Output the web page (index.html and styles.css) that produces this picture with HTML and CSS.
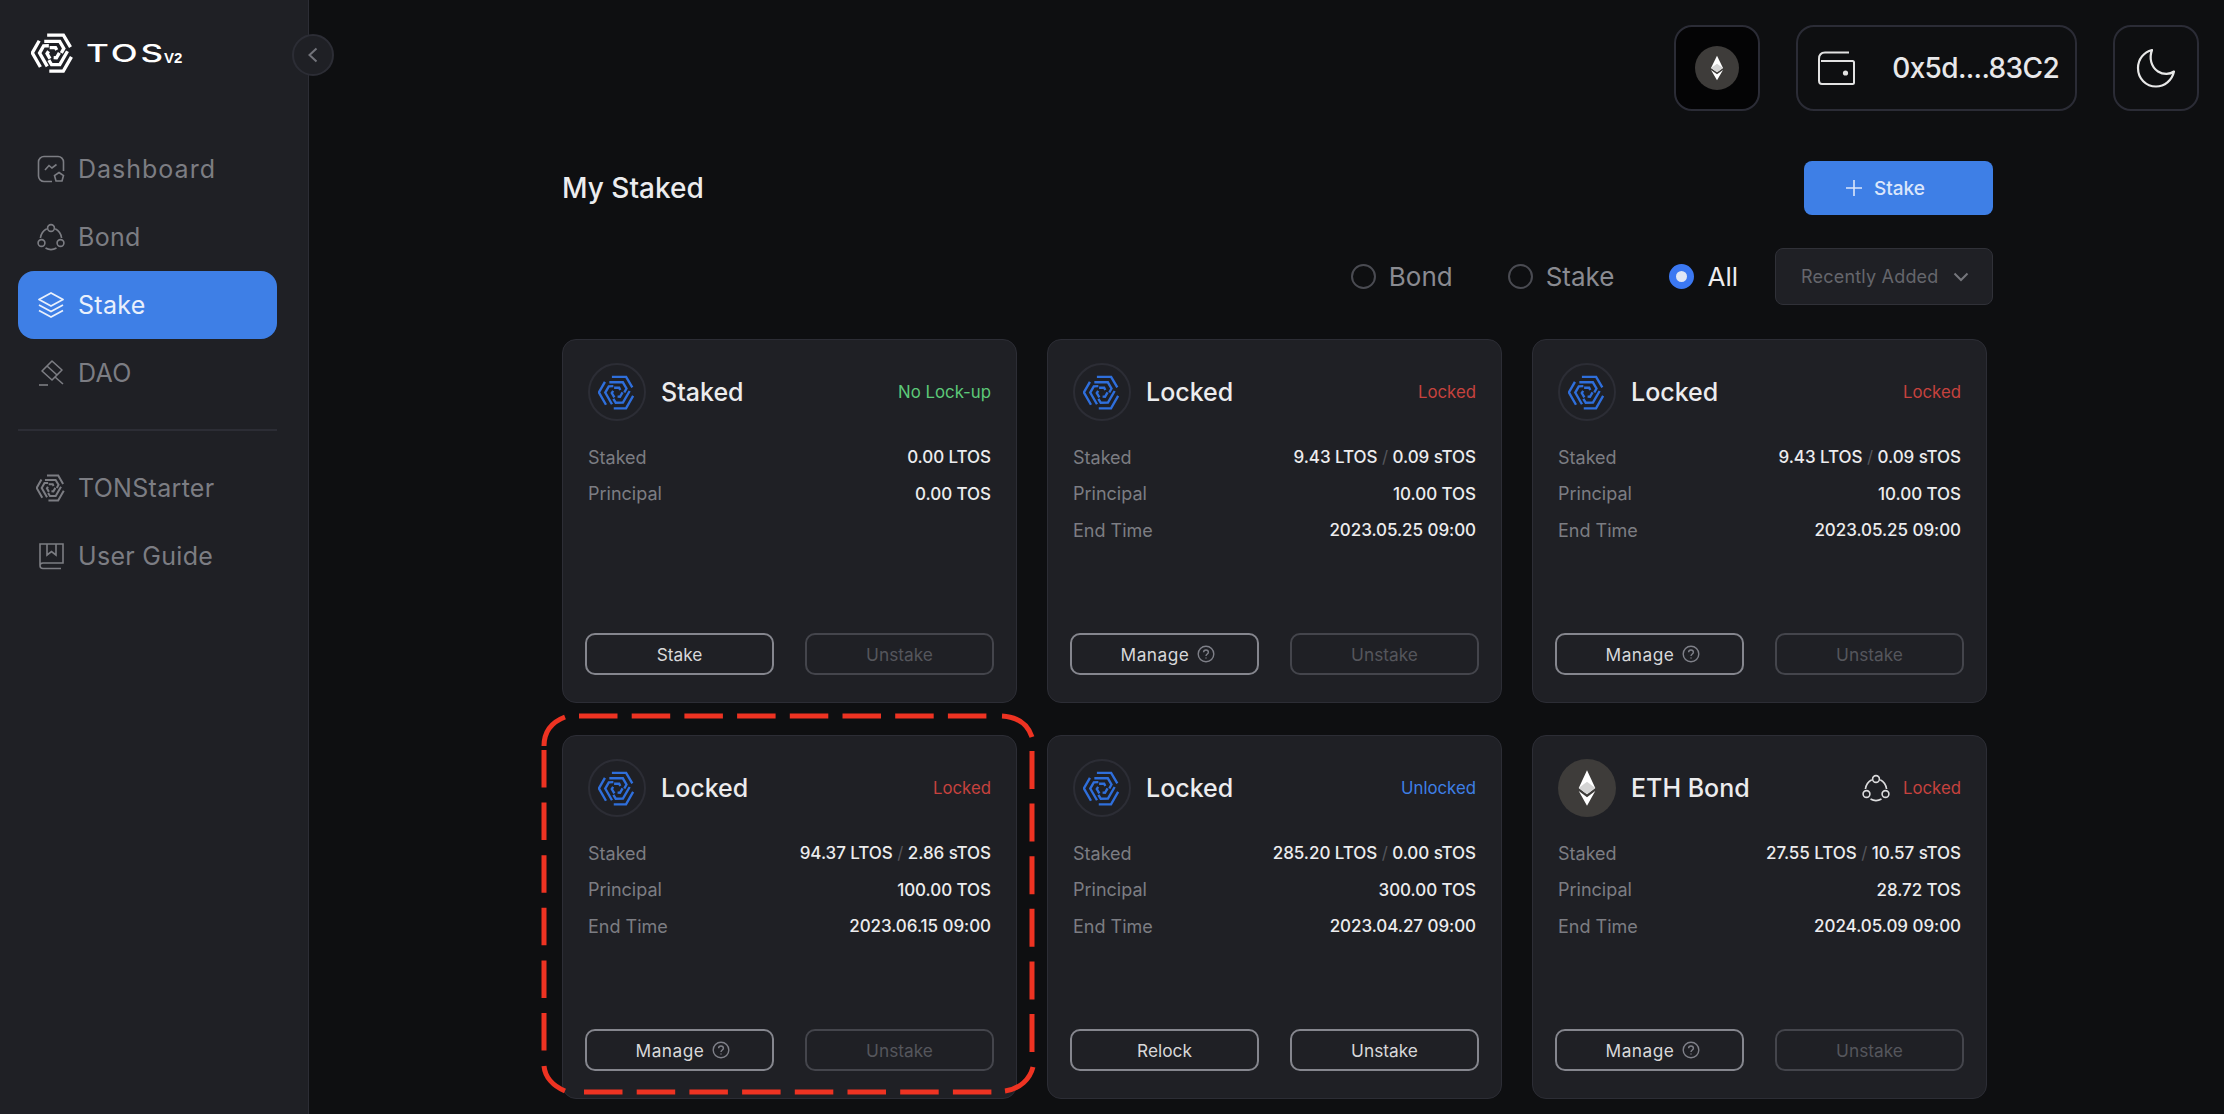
FILE: index.html
```html
<!DOCTYPE html>
<html lang="en">
<head>
<meta charset="utf-8">
<title>TOS V2 - Stake</title>
<link rel="stylesheet" href="styles.css">
</head>
<body>
<svg class="defs" width="0" height="0" aria-hidden="true">
  <defs>
    <g id="arm" fill="none" stroke="currentColor" stroke-linejoin="miter" stroke-linecap="butt">
      <path d="M-14 -43H25L42 -14"/>
      <path d="M-21 -28H16L26 -11L20 0"/>
      <path d="M-8 -13H6L9 -7"/>
    </g>
    <g id="swirl">
      <use href="#arm"/>
      <use href="#arm" transform="rotate(120)"/>
      <use href="#arm" transform="rotate(240)"/>
    </g>
    <g id="bond" fill="none" stroke="currentColor" stroke-width="1.6">
      <circle cx="14" cy="5" r="3.4"/>
      <circle cx="4.5" cy="20" r="3.4"/>
      <circle cx="23.5" cy="20" r="3.4"/>
      <path d="M9.8 5.8C6.5 7.5 4 10.8 3.4 15"/>
      <path d="M18.2 5.8C21.5 7.5 24 10.8 24.6 15"/>
      <path d="M8.5 25C12 27 16 27 19.5 25"/>
    </g>
    <g id="eth">
      <path d="M12 1L3 16.5L12 22L21 16.5Z" fill="#fff"/>
      <path d="M3 19L12 32L21 19L12 24.5Z" fill="#fff"/>
      <path d="M12 11L3 16.5L12 22L21 16.5Z" fill="#d4d4d4"/>
    </g>
    <g id="help" fill="none" stroke="#7f8089" stroke-width="1.4">
      <circle cx="9" cy="9" r="7.8"/>
      <path d="M6.6 7.2C6.6 5.8 7.7 5 9 5S11.4 5.9 11.4 7.2C11.4 8.9 9 9 9 11"/>
      <path d="M9 12.4V13.6"/>
    </g>
  </defs>
</svg>

<aside class="sidebar">
  <div class="brand">
    <svg class="brand-mark" viewBox="-52 -48 104 96"><use href="#swirl"/></svg>
    <span class="brand-name">TOS</span><span class="brand-ver">V2</span>
  </div>
  <button class="collapse" aria-label="Collapse">
    <svg width="14" height="20" viewBox="0 0 14 20"><path d="M10.5 3.5L3.5 10L10.5 16.5" fill="none" stroke="#72737a" stroke-width="2"/></svg>
  </button>
  <nav class="nav">
    <a class="nav-item">
      <svg class="nav-icon" viewBox="0 0 28 28" fill="none" stroke="currentColor" stroke-width="1.6">
        <path d="M15 26.500H7A5.500 5.500 0 0 1 1.500 21V7A5.500 5.500 0 0 1 7 1.500H21A5.500 5.500 0 0 1 26.500 7V16"/>
        <path d="M8 15L12 10.500L15 13L19.500 9.500"/>
        <path d="M22 17.500L26.500 20.500L25 26H19L17.500 20.500Z"/>
      </svg>
      <span class="nav-wide">Dashboard</span>
    </a>
    <a class="nav-item">
      <svg class="nav-icon" viewBox="0 0 28 28"><use href="#bond"/></svg>
      <span>Bond</span>
    </a>
    <a class="nav-item active">
      <svg class="nav-icon" viewBox="0 0 28 28" fill="none" stroke="currentColor" stroke-width="1.8" stroke-linejoin="round">
        <path d="M14 2L26 8.500L14 15L2 8.500Z"/>
        <path d="M2 14L14 20.500L26 14"/>
        <path d="M2 19.500L14 26L26 19.500"/>
      </svg>
      <span>Stake</span>
    </a>
    <a class="nav-item">
      <svg class="nav-icon" viewBox="0 0 28 28" fill="none" stroke="currentColor" stroke-width="1.6">
        <path d="M15 2L25 11L15 21L5 12Z" stroke-linejoin="round"/>
        <path d="M10 7L20 16"/>
        <path d="M18 18L26 25"/>
        <path d="M2 26H11"/>
      </svg>
      <span>DAO</span>
    </a>
    <div class="nav-rule"></div>
    <a class="nav-item">
      <svg class="nav-icon nav-swirl" viewBox="-52 -48 104 96"><use href="#swirl"/></svg>
      <span>TONStarter</span>
    </a>
    <a class="nav-item">
      <svg class="nav-icon" viewBox="0 0 28 28" fill="none" stroke="currentColor" stroke-width="1.6">
        <path d="M3 23V2H26V21H6C4 21 3 22 3 23.500C3 25 4 26.500 6 26.500H24"/>
        <path d="M10 2V13L14.500 9.500L19 13V2"/>
      </svg>
      <span>User Guide</span>
    </a>
  </nav>
</aside>

<main class="main">
  <header class="topbar">
    <button class="top-btn eth-btn" aria-label="Ethereum">
      <span class="eth-coin"><svg width="16" height="26" viewBox="0 0 24 33" preserveAspectRatio="none"><use href="#eth"/></svg></span>
    </button>
    <button class="top-btn wallet-btn">
      <svg width="38" height="34" viewBox="0 0 38 34" fill="none" stroke="#e2e2e2" stroke-width="2"><path d="M2 8C2 4 4 1.500 8 1.500H32"/><path d="M2 8V29.500C2 31.500 3 33 5 33H35.500C36.500 33 37 32.500 37 31.500V11.500C37 10.500 36.500 10 35.500 10H4"/><circle cx="28.500" cy="22" r="2.600" fill="#e2e2e2" stroke="none"/></svg>
      <span class="addr">0x5d....83C2</span>
    </button>
    <button class="top-btn moon-btn" aria-label="Theme">
      <svg width="40" height="40" viewBox="0 0 40 40" fill="none" stroke="#e8e8e8" stroke-width="2.200"><path d="M16 2C8 4 2 11 2 20C2 30.500 10 38.500 20 38.500C28.500 38.500 36 32.500 38 23.500C34 26.500 27.500 27 22 23.500C15 19 13 10 16 2Z" stroke-linejoin="round"/></svg>
    </button>
  </header>

  <section class="content">
    <div class="title-row">
      <h1 class="page-title">My Staked</h1>
      <button class="primary-btn">
        <svg width="16" height="16" viewBox="0 0 16 16"><path d="M8 0V16M0 8H16" stroke="#dbe6fb" stroke-width="1.600"/></svg>
        <span>Stake</span>
      </button>
    </div>

    <div class="filter-row">
      <label class="radio"><span class="radio-dot"></span>Bond</label>
      <label class="radio"><span class="radio-dot"></span>Stake</label>
      <label class="radio on"><span class="radio-dot"></span>All</label>
      <div class="select">
        <span>Recently Added</span>
        <svg width="16" height="10" viewBox="0 0 16 10"><path d="M1.500 1.500L8 8L14.500 1.500" fill="none" stroke="#75767c" stroke-width="2"/></svg>
      </div>
    </div>

    <div class="cards">
      <article class="card">
        <div class="card-head">
          <span class="coin"><svg class="coin-swirl" viewBox="-52 -48 104 96"><use href="#swirl"/></svg></span>
          <h2 class="card-title">Staked</h2>
          <span class="status green">No Lock-up</span>
        </div>
        <dl class="rows">
          <div class="row"><dt>Staked</dt><dd>0.00 LTOS</dd></div>
          <div class="row"><dt>Principal</dt><dd>0.00 TOS</dd></div>
        </dl>
        <div class="actions">
          <button class="btn">Stake</button>
          <button class="btn off">Unstake</button>
        </div>
      </article>

      <article class="card">
        <div class="card-head">
          <span class="coin"><svg class="coin-swirl" viewBox="-52 -48 104 96"><use href="#swirl"/></svg></span>
          <h2 class="card-title">Locked</h2>
          <span class="status red">Locked</span>
        </div>
        <dl class="rows">
          <div class="row"><dt>Staked</dt><dd>9.43 LTOS <i>/</i> 0.09 sTOS</dd></div>
          <div class="row"><dt>Principal</dt><dd>10.00 TOS</dd></div>
          <div class="row"><dt>End Time</dt><dd>2023.05.25 09:00</dd></div>
        </dl>
        <div class="actions">
          <button class="btn"><span class="btn-label">Manage</span><svg width="18" height="18" viewBox="0 0 18 18"><use href="#help"/></svg></button>
          <button class="btn off">Unstake</button>
        </div>
      </article>

      <article class="card">
        <div class="card-head">
          <span class="coin"><svg class="coin-swirl" viewBox="-52 -48 104 96"><use href="#swirl"/></svg></span>
          <h2 class="card-title">Locked</h2>
          <span class="status red">Locked</span>
        </div>
        <dl class="rows">
          <div class="row"><dt>Staked</dt><dd>9.43 LTOS <i>/</i> 0.09 sTOS</dd></div>
          <div class="row"><dt>Principal</dt><dd>10.00 TOS</dd></div>
          <div class="row"><dt>End Time</dt><dd>2023.05.25 09:00</dd></div>
        </dl>
        <div class="actions">
          <button class="btn"><span class="btn-label">Manage</span><svg width="18" height="18" viewBox="0 0 18 18"><use href="#help"/></svg></button>
          <button class="btn off">Unstake</button>
        </div>
      </article>

      <article class="card">
        <div class="card-head">
          <span class="coin"><svg class="coin-swirl" viewBox="-52 -48 104 96"><use href="#swirl"/></svg></span>
          <h2 class="card-title">Locked</h2>
          <span class="status red">Locked</span>
        </div>
        <dl class="rows">
          <div class="row"><dt>Staked</dt><dd>94.37 LTOS <i>/</i> 2.86 sTOS</dd></div>
          <div class="row"><dt>Principal</dt><dd>100.00 TOS</dd></div>
          <div class="row"><dt>End Time</dt><dd>2023.06.15 09:00</dd></div>
        </dl>
        <div class="actions">
          <button class="btn"><span class="btn-label">Manage</span><svg width="18" height="18" viewBox="0 0 18 18"><use href="#help"/></svg></button>
          <button class="btn off">Unstake</button>
        </div>
      </article>

      <article class="card">
        <div class="card-head">
          <span class="coin"><svg class="coin-swirl" viewBox="-52 -48 104 96"><use href="#swirl"/></svg></span>
          <h2 class="card-title">Locked</h2>
          <span class="status blue">Unlocked</span>
        </div>
        <dl class="rows">
          <div class="row"><dt>Staked</dt><dd>285.20 LTOS <i>/</i> 0.00 sTOS</dd></div>
          <div class="row"><dt>Principal</dt><dd>300.00 TOS</dd></div>
          <div class="row"><dt>End Time</dt><dd>2023.04.27 09:00</dd></div>
        </dl>
        <div class="actions">
          <button class="btn">Relock</button>
          <button class="btn">Unstake</button>
        </div>
      </article>

      <article class="card">
        <div class="card-head">
          <span class="coin coin-eth"><svg width="22" height="38" viewBox="0 0 24 33" preserveAspectRatio="none"><use href="#eth"/></svg></span>
          <h2 class="card-title">ETH Bond</h2>
          <svg class="status-icon" width="28" height="28" viewBox="0 0 28 28"><use href="#bond"/></svg>
          <span class="status red">Locked</span>
        </div>
        <dl class="rows">
          <div class="row"><dt>Staked</dt><dd>27.55 LTOS <i>/</i> 10.57 sTOS</dd></div>
          <div class="row"><dt>Principal</dt><dd>28.72 TOS</dd></div>
          <div class="row"><dt>End Time</dt><dd>2024.05.09 09:00</dd></div>
        </dl>
        <div class="actions">
          <button class="btn"><span class="btn-label">Manage</span><svg width="18" height="18" viewBox="0 0 18 18"><use href="#help"/></svg></button>
          <button class="btn off">Unstake</button>
        </div>
      </article>
    </div>
  </section>
</main>

<svg class="callout" width="2224" height="1114" viewBox="0 0 2224 1114" fill="none" aria-hidden="true">
  <g stroke="#ee3322" stroke-width="5">
    <path d="M544 746C544 731 552 722 565 717"/>
    <path d="M1002 716C1018 717 1028 725 1032 737"/>
    <path d="M544 1066C545 1077 553 1086 565 1091"/>
    <path d="M1033 1067C1030 1079 1020 1089 1005 1091"/>
    <path d="M579 716H990" stroke-dasharray="38.500 14.200"/>
    <path d="M584 1092H995" stroke-dasharray="38.500 14.200"/>
    <path d="M544 750V1055" stroke-dasharray="37.500 15.100"/>
    <path d="M1032 751V1056" stroke-dasharray="38 14.600"/>
  </g>
</svg>
</body>
</html>
```

FILE: styles.css
```css
* { box-sizing: border-box; }

html, body { margin: 0; height: 100%; }

body {
  display: flex;
  width: 2224px;
  height: 1114px;
  overflow: hidden;
  background: #0e0f11;
  color: #e8e8ea;
  font-family: "Inter", "Liberation Sans", sans-serif;
}

button {
  font-family: inherit;
  cursor: pointer;
}

h1, h2, dl, dd, dt { margin: 0; }

.defs { position: absolute; }

/* sidebar */
.sidebar {
  position: relative;
  flex: 0 0 309px;
  height: 100%;
  padding: 0 31px 0 18px;
  background: #1f2025;
  border-right: 1px solid #2c2d35;
}

.brand {
  display: flex;
  align-items: flex-end;
  height: 73px;
  padding: 33px 0 0 13px;
  color: #fff;
}

.brand-mark {
  width: 44px;
  height: 40px;
  stroke-width: 8;
}

.brand-name {
  width: 77px;
  margin: 0 0 9px 11px;
  font-size: 24px;
  line-height: 20px;
  font-weight: 500;
  letter-spacing: 2px;
  transform: scaleX(1.46);
  transform-origin: left center;
}

.brand-ver {
  margin: 0 0 9px 1px;
  font-size: 15px;
  line-height: 13px;
  font-weight: 700;
  font-family: "Liberation Sans", sans-serif;
}

.collapse {
  position: absolute;
  top: 34px;
  left: 292px;
  display: flex;
  align-items: center;
  justify-content: center;
  width: 42px;
  height: 42px;
  padding: 0;
  background: #1f2025;
  border: 2px solid #2c2d35;
  border-radius: 50%;
}

.nav {
  display: flex;
  flex-direction: column;
  margin-top: 62px;
}

.nav-item {
  display: flex;
  align-items: center;
  gap: 13px;
  height: 68px;
  padding-left: 19px;
  border-radius: 16px;
  color: #7c7d83;
  font-size: 25px;
  letter-spacing: 0.3px;
}

.nav-wide { letter-spacing: 1px; }

.nav-item.active {
  background: #3e7fe6;
  color: #e9f0fc;
}

.nav-icon {
  flex: none;
  width: 28px;
  height: 28px;
}

.nav-swirl {
  width: 30px;
  height: 28px;
  margin: 0 -1px;
  stroke-width: 7;
}

.nav-rule {
  height: 2px;
  margin: 22px 0 23px;
  background: #2c2d35;
}

/* top bar */
.main {
  flex: 1;
  min-width: 0;
}

.topbar {
  display: flex;
  justify-content: flex-end;
  gap: 36px;
  padding: 25px 25px 0 0;
}

.top-btn {
  display: flex;
  align-items: center;
  justify-content: center;
  height: 86px;
  background: transparent;
  border: 2px solid #2b2c36;
  border-radius: 18px;
}

.eth-btn {
  width: 86px;
  background: #040405;
}

.eth-coin {
  display: flex;
  align-items: center;
  justify-content: center;
  width: 44px;
  height: 44px;
  background: #3e3c3a;
  border-radius: 50%;
}

.wallet-btn {
  justify-content: space-between;
  width: 281px;
  padding: 0 16px 0 19px;
}

.addr {
  color: #e8e8ea;
  font-size: 28px;
  font-weight: 500;
  letter-spacing: -0.65px;
}

.moon-btn { width: 86px; }

/* content */
.content {
  width: 1431px;
  margin: 50px 0 0 253px;
}

.title-row {
  display: flex;
  align-items: center;
  justify-content: space-between;
}

.page-title {
  color: #ececee;
  font-size: 28px;
  font-weight: 500;
}

.primary-btn {
  display: flex;
  align-items: center;
  justify-content: center;
  gap: 12px;
  width: 189px;
  height: 54px;
  padding: 0 26px 0 0;
  background: #3e7fe6;
  border: 0;
  border-radius: 8px;
  color: #dbe6fb;
  font-size: 19px;
  font-weight: 500;
}

.filter-row {
  display: flex;
  align-items: center;
  justify-content: flex-end;
  height: 57px;
  margin-top: 33px;
}

.radio {
  display: flex;
  align-items: center;
  gap: 13px;
  margin-right: 55px;
  color: #8a8b91;
  font-size: 26px;
}

.radio.on {
  margin-right: 37px;
  color: #ececee;
}

.radio-dot {
  width: 25px;
  height: 25px;
  border: 2.5px solid #4a4b52;
  border-radius: 50%;
}

.radio.on .radio-dot {
  border: 7.5px solid #3b78f2;
  background: #dfe6f5;
}

.select {
  display: flex;
  align-items: center;
  justify-content: space-between;
  width: 218px;
  height: 57px;
  padding: 0 23px 0 25px;
  background: #1f2025;
  border: 1px solid #303138;
  border-radius: 8px;
  color: #65666c;
  font-size: 18px;
  letter-spacing: 0.2px;
}

/* cards */
.cards {
  display: grid;
  grid-template-columns: repeat(3, 455px);
  grid-auto-rows: 364px;
  gap: 32px 30px;
  margin-top: 34px;
}

.card {
  display: flex;
  flex-direction: column;
  padding: 23px 22px 27px;
  background: #1f2025;
  border: 1px solid #2c2d35;
  border-radius: 14px;
}

.card-head {
  display: flex;
  align-items: center;
  margin: 0 3px;
}

.coin {
  display: flex;
  flex: none;
  align-items: center;
  justify-content: center;
  width: 58px;
  height: 58px;
  margin-right: 15px;
  border: 2px solid #2c2d35;
  border-radius: 50%;
}

.coin-swirl {
  width: 38px;
  height: 35px;
  color: #2f6fdc;
  stroke-width: 6.5;
}

.coin-eth {
  background: #3e3c3a;
  border: 0;
}

.card-title {
  flex: 1;
  color: #ececee;
  font-size: 25px;
  font-weight: 500;
}

.status {
  font-size: 16.800px;
}

.status-icon {
  margin-right: 13px;
  color: #dcdcde;
}

.green { color: #5cc878; }
.red { color: #c6423e; }
.blue { color: #3e7fe6; }

.rows {
  margin: 18px 3px 0;
}

.row {
  display: flex;
  align-items: center;
  justify-content: space-between;
  height: 36.500px;
}

.row dt {
  color: #7c7d83;
  font-size: 18px;
}

.row dd {
  color: #ececee;
  font-size: 17px;
  font-weight: 500;
  letter-spacing: -0.05px;
}

.row i {
  color: #55565c;
  font-style: normal;
  font-weight: 400;
}

.actions {
  display: flex;
  gap: 31px;
  margin-top: auto;
}

.btn {
  display: flex;
  flex: 1;
  align-items: center;
  justify-content: center;
  gap: 8px;
  height: 42px;
  padding: 0;
  background: transparent;
  border: 2px solid #85868e;
  border-radius: 10px;
  color: #d8d8da;
  font-size: 17.300px;
}

.btn-label {
  margin-left: 7px;
  letter-spacing: 0.5px;
}

.btn.off {
  border-color: #44454c;
  color: #55565c;
}

/* annotation drawn over the page */
.callout {
  position: absolute;
  top: 0;
  left: 0;
  pointer-events: none;
}
```
